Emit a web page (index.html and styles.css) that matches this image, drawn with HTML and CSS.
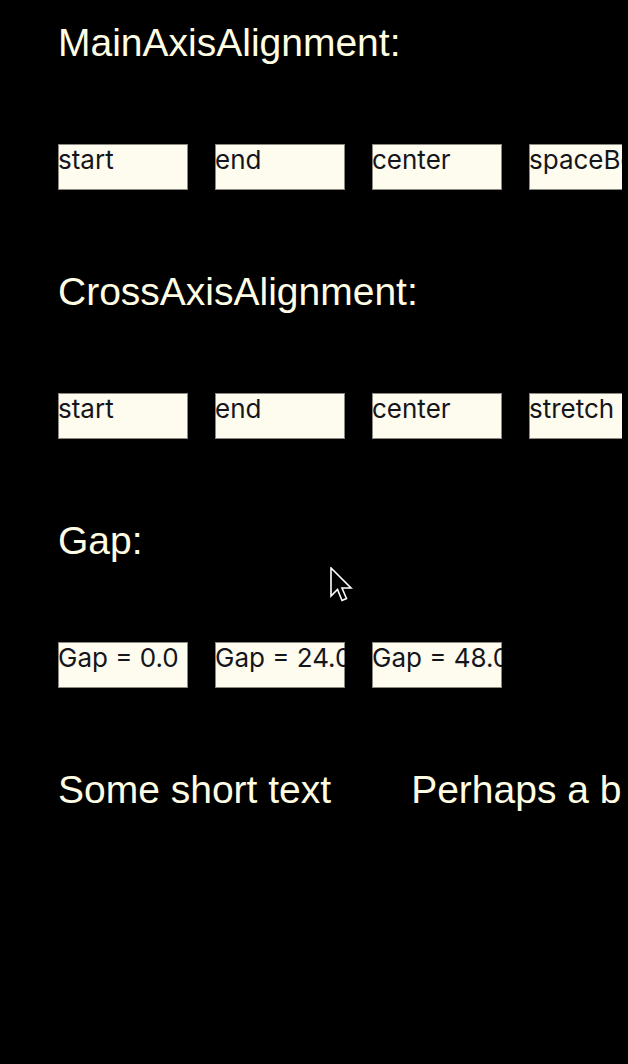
FILE: index.html
```html
<!DOCTYPE html>
<html>
<head>
<meta charset="utf-8">
<link rel="stylesheet" href="styles.css">
</head>
<body>
<div class="screen">
  <div class="content">
    <section class="section">
      <h2 class="title">MainAxisAlignment:</h2>
      <div class="row">
        <div class="btn">start</div>
        <div class="btn">end</div>
        <div class="btn">center</div>
        <div class="btn">spaceBetween</div>
      </div>
    </section>
    <section class="section">
      <h2 class="title">CrossAxisAlignment:</h2>
      <div class="row">
        <div class="btn">start</div>
        <div class="btn">end</div>
        <div class="btn">center</div>
        <div class="btn">stretch</div>
      </div>
    </section>
    <section class="section">
      <h2 class="title">Gap:</h2>
      <div class="row">
        <div class="btn">Gap = 0.0</div>
        <div class="btn">Gap = 24.0</div>
        <div class="btn">Gap = 48.0</div>
      </div>
    </section>
    <div class="textrow">
      <span class="title">Some short text</span>
      <span class="title">Perhaps a bit longer text</span>
    </div>
  </div>
  <svg class="cursor" width="24" height="36" viewBox="0 0 24 36">
    <path d="M1 1 L1 29 L7.5 22.5 L12 33.5 L16.5 31.5 L12 21 L21 21 Z" fill="#000" stroke="#fff" stroke-width="1.6" stroke-linejoin="miter"/>
  </svg>
</div>
</body>
</html>
```
FILE: styles.css
```css
html, body {
  margin: 0;
  padding: 0;
  background: #000;
}
.screen {
  position: relative;
  width: 628px;
  height: 1064px;
  background: #000;
  overflow: hidden;
}
.content {
  width: 564px;
  padding: 20px 0 0 58px;
  overflow: hidden;
  display: flex;
  flex-direction: column;
  gap: 79px;
}
.section {
  display: flex;
  flex-direction: column;
  gap: 79px;
}
.title {
  margin: 0;
  font-family: "Liberation Sans", Arial, sans-serif;
  font-weight: 400;
  font-size: 39px;
  line-height: 45px;
  height: 45px;
  color: #fffde4;
  white-space: nowrap;
}
.row {
  display: flex;
  gap: 27px;
}
.btn {
  flex: 0 0 130px;
  width: 130px;
  height: 46px;
  box-sizing: border-box;
  overflow: hidden;
  white-space: nowrap;
  background: #fdfcee;
  box-shadow: inset 0 0 0 1px #8c8a80;
  font-family: Inter, "Noto Sans", sans-serif;
  font-size: 26px;
  line-height: normal;
  color: #15151c;
}
.textrow {
  display: flex;
  gap: 80px;
  white-space: nowrap;
}
.cursor {
  position: absolute;
  left: 330px;
  top: 567px;
}
```
